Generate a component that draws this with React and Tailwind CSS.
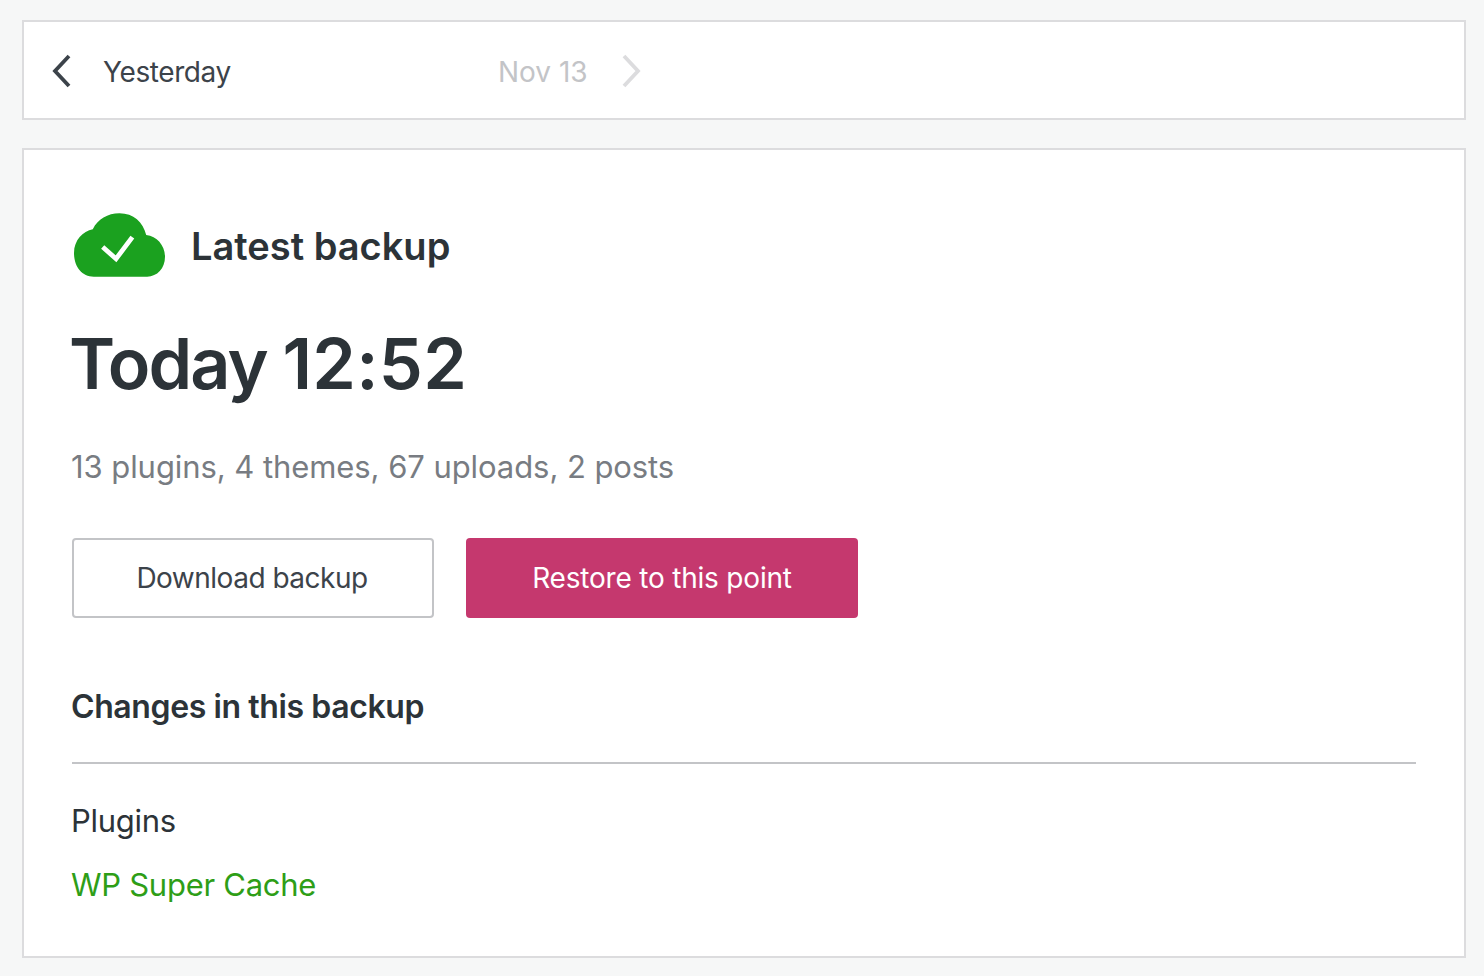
export default function App() {
  return (
    <div className="min-h-[976px] bg-[#f6f7f7] pl-[22px] pr-[18px] pt-5 font-['Inter',sans-serif] text-[#2c3338]">
      <nav className="flex h-[100px] items-center border-2 border-[#dcdcde] bg-white pl-[25px]">
        <svg className="mt-[1px]" width="24" height="36" viewBox="0 0 24 36" fill="none" stroke="#3c434a" strokeWidth="3.8">
          <path d="M20 3 L6 18 L20 33" />
        </svg>
        <span className="ml-[30px] w-[395px] pt-[3px] text-[28px] tracking-[-0.4px] text-[#3c434a]">Yesterday</span>
        <span className="pt-[3px] text-[28px] text-[#c3c4c7]">Nov 13</span>
        <svg className="ml-[32px] mt-[1px]" width="24" height="36" viewBox="0 0 24 36" fill="none" stroke="#dcdcde" strokeWidth="3.8">
          <path d="M4 3 L18 18 L4 33" />
        </svg>
      </nav>
      <main className="mt-7 h-[810px] border-2 border-[#dcdcde] bg-white px-12 pt-[62px]">
        <div className="flex h-[66px] items-center">
          <svg className="ml-[2px]" width="91" height="64" viewBox="0 0 92 64">
            <path fill="#1ba11f" d="M20 64 C8 64 0 54 0 40 C0 27 9 18 19 16 C24 6 34 0 46 0 C60 0 70 9 73 22 C84 23 92 33 92 44 C92 56 84 64 74 64 Z" />
            <path fill="none" stroke="#fff" strokeWidth="4.8" d="M29 34 L42.500 46 L59 24" />
          </svg>
          <h2 className="ml-[26px] pt-[2px] text-[38px] font-semibold">Latest backup</h2>
        </div>
        <h1 className="mt-[41px] ml-[-3px] text-[70px] leading-[90px] font-semibold">
          <span className="tracking-[-1.9px]">Today</span>{' '}
          <span className="ml-[-2px] tracking-[0.3px]">12:52</span>
        </h1>
        <p className="mt-[36px] -ml-px text-[31px] leading-[44px] tracking-[-0.07px] text-[#787c82]">13 plugins, 4 themes, 67 uploads, 2 posts</p>
        <div className="mt-[49px] flex gap-8">
          <button className="h-[80px] w-[362px] rounded-[4px] border-2 border-[#c3c4c7] bg-white pr-[2px] text-[28px] tracking-[-0.5px] text-[#3c434a]">Download backup</button>
          <button className="h-[80px] w-[392px] rounded-[4px] bg-[#c5386e] text-[28px] tracking-[-0.2px] text-white">Restore to this point</button>
        </div>
        <h3 className="mt-[69px] -ml-px text-[32px] leading-[40px] font-semibold tracking-[-0.4px]">Changes in this backup</h3>
        <div className="mt-[35px] h-[2px] bg-[#c3c4c7]" />
        <p className="mt-[35px] -ml-px text-[31px] leading-[44px] tracking-[-0.27px]">Plugins</p>
        <p className="mt-[20px] -ml-px text-[31px] leading-[44px] tracking-[-0.27px] text-[#2e9e17]">WP Super Cache</p>
      </main>
    </div>
  );
}
